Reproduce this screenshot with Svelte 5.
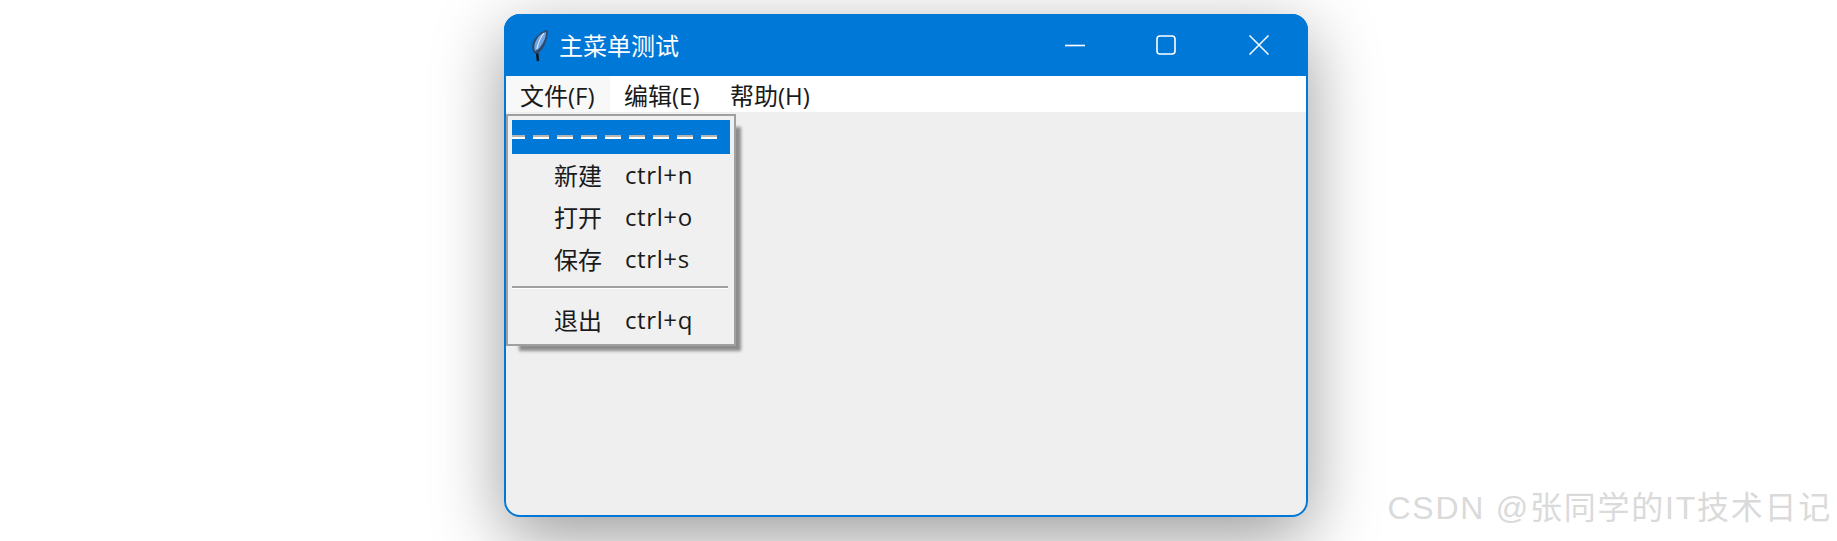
<script>
  const menus = [
    { label: "文件(F)", width: 104, active: true },
    { label: "编辑(E)", width: 106 },
    { label: "帮助(H)", width: 106 }
  ];

  const items = [
    { label: "新建", accel: "ctrl+n" },
    { label: "打开", accel: "ctrl+o" },
    { label: "保存", accel: "ctrl+s" },
    { separator: true },
    { label: "退出", accel: "ctrl+q" }
  ];
</script>

<div class="page">
  <div class="window">
    <header class="titlebar">
      <svg class="feather" viewBox="0 0 18 33" width="18" height="33" aria-hidden="true">
        <path d="M8 32 L7 23" stroke="#111" stroke-width="2.4" fill="none" />
        <path d="M5 25 C0 20 2 12 7 7 C10 4 14 1 18 1 C18 7 16 14 13 19 C11 22 8 25 5 25 Z" fill="#2f4a6e" />
        <path d="M5 22 C3 16 6 11 9 7 C11 5 13 4 16 3 C16 8 14 13 11 17 C9 20 7 21 5 22 Z" fill="#6fa6e6" />
        <path d="M7 20 C8 14 10 9 14 4" stroke="#e4ecf5" stroke-width="1.2" fill="none" />
      </svg>
      <span class="title">主菜单测试</span>
      <div class="controls">
        <svg class="control min" viewBox="0 0 20 20" width="20" height="20" aria-hidden="true">
          <path d="M0 10.5 H20" stroke="#fff" stroke-width="1.6" />
        </svg>
        <svg class="control max" viewBox="0 0 20 20" width="20" height="20" aria-hidden="true">
          <rect x="1" y="1" width="18" height="18" rx="3" fill="none" stroke="#fff" stroke-width="1.6" />
        </svg>
        <svg class="control close" viewBox="0 0 20 20" width="20" height="20" aria-hidden="true">
          <path d="M0.5 0.5 L19.5 19.5 M19.5 0.5 L0.5 19.5" stroke="#fff" stroke-width="1.5" fill="none" />
        </svg>
      </div>
    </header>

    <nav class="menubar">
      {#each menus as menu}
        <span class="menu" class:active={menu.active} style="width: {menu.width}px">{menu.label}</span>
      {/each}
    </nav>

    <div class="content"></div>

    <div class="popup">
      <div class="tearoff"><span class="dashes"></span></div>
      {#each items as item}
        {#if item.separator}
          <div class="separator"></div>
        {:else}
          <div class="item">
            <span class="label">{item.label}</span>
            <span class="accel">{item.accel}</span>
          </div>
        {/if}
      {/each}
    </div>
  </div>

  <div class="watermark">CSDN @张同学的IT技术日记</div>
</div>

<style>
  :global(body) {
    margin: 0;
    background: #fff;
    overflow: hidden;
  }

  .page {
    position: relative;
    width: 1837px;
    height: 541px;
    padding: 14px 0 0 504px;
    box-sizing: border-box;
    overflow: hidden;
    font-family: "Open Sans", "Noto Sans CJK SC", sans-serif;
  }

  .window {
    position: relative;
    width: 804px;
    height: 503px;
    box-sizing: border-box;
    display: flex;
    flex-direction: column;
    background: #efefef;
    border: 2px solid #0078d7;
    border-radius: 16px;
    box-shadow: 0 20px 70px rgba(0, 0, 0, 0.4);
  }

  .titlebar {
    height: 62px;
    margin: -2px -2px 0;
    padding-left: 26px;
    display: flex;
    align-items: center;
    flex-shrink: 0;
    background: #0078d7;
    border-radius: 16px 16px 0 0;
  }

  .feather {
    flex-shrink: 0;
  }

  .title {
    margin-left: 11px;
    color: #fff;
    font-size: 24px;
    font-family: "Noto Sans CJK SC", sans-serif;
    line-height: 1;
  }

  .controls {
    margin-left: auto;
    display: flex;
    align-items: center;
    padding-right: 39px;
  }

  .control {
    display: block;
  }

  .max {
    margin-left: 71px;
  }

  .close {
    margin-left: 73px;
  }

  .menubar {
    height: 36px;
    display: flex;
    flex-shrink: 0;
    background: #fff;
    font-size: 24px;
    color: #1a1a1a;
  }

  .menu {
    display: flex;
    align-items: center;
    padding-left: 14px;
    box-sizing: border-box;
    white-space: nowrap;
  }

  .menu.active {
    background: #f8f8f8;
  }

  .content {
    flex: 1;
  }

  .popup {
    position: absolute;
    left: 0;
    top: 98px;
    width: 230px;
    box-sizing: border-box;
    padding: 4px 4px 3px;
    background: #f0f0f0;
    border: 2px solid #a0a0a0;
    box-shadow: 9px 9px 3px -4px #8c8c8c;
    color: #1a1a1a;
    font-size: 24px;
  }

  .tearoff {
    height: 34px;
    display: flex;
    align-items: center;
    background: #0078d7;
  }

  .dashes {
    display: block;
    width: 206px;
    height: 4px;
    background:
      repeating-linear-gradient(to right, #b4b4b4 0 13px, transparent 13px 21px, #b4b4b4 21px 24px) 0 0 / 100% 2px no-repeat,
      repeating-linear-gradient(to right, #fff 0 13px, transparent 13px 21px, #fff 21px 24px) 0 2px / 100% 2px no-repeat;
  }

  .item {
    height: 42px;
    box-sizing: border-box;
    padding: 0 0 2px 42px;
    display: flex;
    align-items: center;
    white-space: nowrap;
  }

  .label {
    width: 71px;
    flex-shrink: 0;
  }

  .accel {
    letter-spacing: 0.6px;
  }

  .separator {
    height: 13px;
    margin: 6px 2px 0 0;
    box-sizing: border-box;
    border-top: 2px solid #a0a0a0;
    background: linear-gradient(#fff 0 1px, transparent 1px);
  }

  .watermark {
    position: absolute;
    right: 5px;
    top: 489px;
    color: #dadada;
    font-family: "Liberation Sans", "Noto Sans CJK SC", sans-serif;
    font-size: 32px;
    letter-spacing: 1.75px;
    line-height: 38px;
    white-space: nowrap;
  }
</style>
